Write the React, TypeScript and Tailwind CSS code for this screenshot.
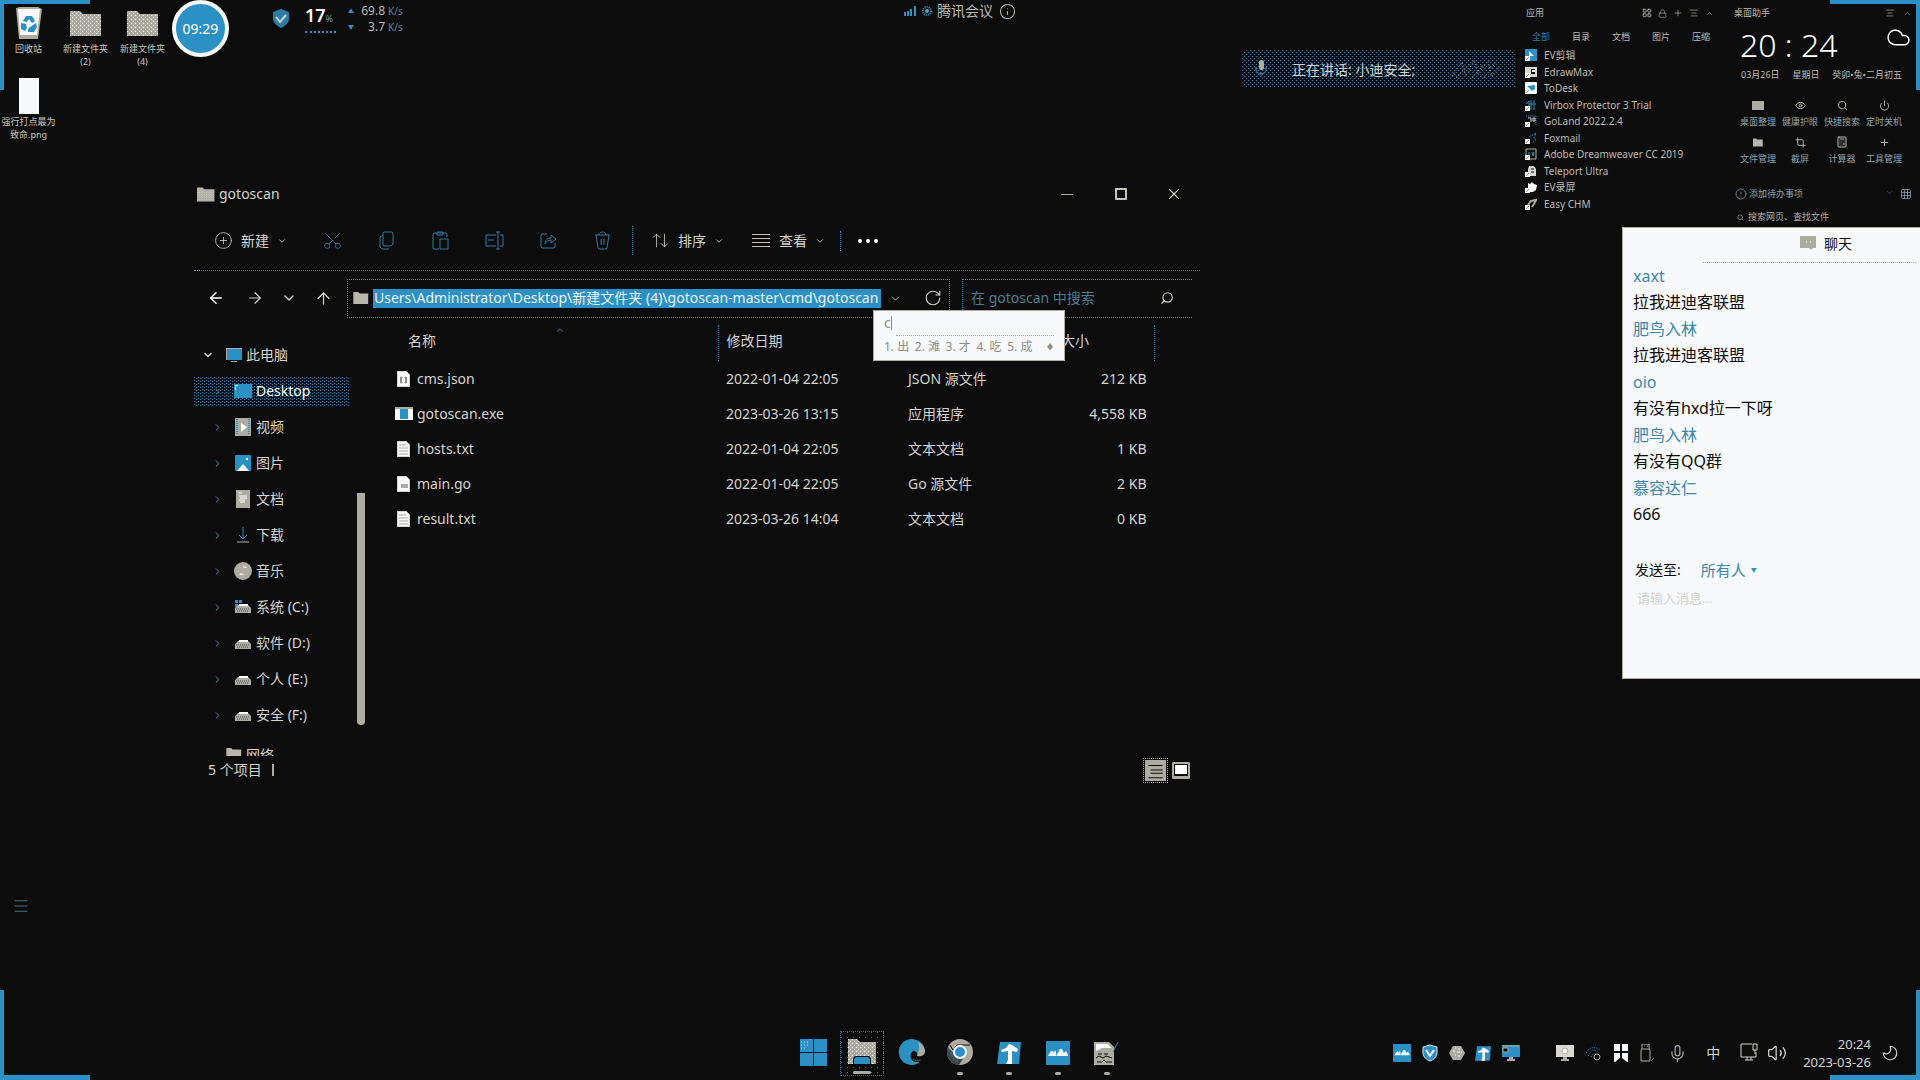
import React from "react";
import {
  ArrowDownUp, ArrowLeft, ArrowRight, ArrowUp, ChevronDown, ChevronRight, ChevronUp, CirclePlus,
  Crop, Eye, Info, Menu, Mic, Moon, Plus, Power, RotateCw, Scissors, Search,
  Volume2, X, Cloud, Calculator, CircleAlert, LayoutGrid, Lock, AlignCenter, Grid3x3,
} from "lucide-react";

type SvgProps = { className?: string };

const FolderIcon = ({ className }: SvgProps) => (
  <svg viewBox="0 0 32 25" className={className} aria-hidden="true">
    <defs>
      <pattern id="grain" width="4" height="4" patternUnits="userSpaceOnUse">
        <rect width="4" height="4" fill="#aeaca0" />
        <rect width="1" height="1" fill="#f8f9fb" />
        <rect x="2" y="2" width="1" height="1" fill="#f8f9fb" />
      </pattern>
    </defs>
    <path d="M0 1 L1 0 H10 L13 3 H31 V25 H0 Z" fill="url(#grain)" />
  </svg>
);

const RecycleBin = () => (
  <svg viewBox="0 0 26 33" className="h-[33px] w-[26px]" aria-hidden="true">
    <path d="M0 1 L4 0 H22 L26 2 L22 32 H3 Z" fill="#aeaca0" />
    <path d="M2 2 H24 L21 28 H4 Z" fill="#f8f9fb" />
    <path d="M10 9h6l3 5-3 2-3-4-2 3-4-1zM5 16l5 1 1 4-2 3-4-2zM14 20l6-4 1 4-3 5h-6v-3z" fill="#2b91c4" />
  </svg>
);

const Shield = ({ className }: SvgProps) => (
  <svg viewBox="0 0 16 19" className={className} aria-hidden="true">
    <path d="M8 0 L16 3 V10 C16 14 12 17 8 19 C4 17 0 14 0 10 V3 Z" fill="#2b7ba5" />
    <path d="M3 8 L7 13 L13 6" stroke="#cfd3d0" strokeWidth="2" fill="none" />
  </svg>
);

const TrayShield = () => (
  <svg viewBox="0 0 16 18" className="h-[18px] w-4" aria-hidden="true">
    <path d="M8 1 L15 3 V9 C15 13 11 16 8 17 C5 16 1 13 1 9 V3 Z" fill="#2b91c4" stroke="#dfe4e6" strokeWidth="1" />
    <path d="M4 6 L8 12 L12 6" stroke="#f8f9fb" strokeWidth="2" fill="none" />
  </svg>
);

const CopyIcon = () => (
  <svg viewBox="0 0 15 19" className="h-[19px] w-[21px]" fill="none" stroke="currentColor" aria-hidden="true">
    <path d="M5 1H13L14 2V13L12 15H5L4 14V2ZM4 4L1 6V16L3 18H10" />
  </svg>
);

const PasteIcon = () => (
  <svg viewBox="0 0 17 19" className="h-[19px] w-[21px]" fill="none" stroke="currentColor" aria-hidden="true">
    <path d="M7 18H2L1 17V3L2 2H14L15 3V6M5 1H11V4H5ZM8 8H16V18H8Z" />
  </svg>
);

const RenameIcon = () => (
  <svg viewBox="0 0 19 19" className="h-[19px] w-[21px]" fill="none" stroke="currentColor" aria-hidden="true">
    <path d="M11 4H1V15H11M15 4H18V15H15M13 1V18M11 1H15M11 18H15M3 9H9" />
  </svg>
);

const ShareIcon = () => (
  <svg viewBox="0 0 17 17" className="h-[17px] w-[21px]" fill="none" stroke="currentColor" aria-hidden="true">
    <path d="M7 2H2L1 3V15L2 16H14L15 15V11M5 12C5 8 8 6 11 6V3L16 7L11 11V8C8 8 6 10 5 12Z" />
  </svg>
);

const TrashIcon = () => (
  <svg viewBox="0 0 17 19" className="h-[19px] w-[21px]" fill="none" stroke="currentColor" aria-hidden="true">
    <path d="M1 4H16M5 4C5 0 12 0 12 4M2 4L4 17L5 18H12L13 17L15 4M7 8V14M10 8V14" />
  </svg>
);

const DownloadIcon = () => (
  <svg viewBox="0 0 12 16" className="h-4 w-3" fill="none" aria-hidden="true">
    <path d="M6 0V12M2 8L6 12L10 8" stroke="#2b91c4" />
    <path d="M0 15H12" stroke="#aeaca0" />
  </svg>
);

const PcIcon = () => (
  <svg viewBox="0 0 16 15" className="h-[15px] w-4" aria-hidden="true">
    <rect x="0" y="0" width="16" height="12" fill="#aeaca0" />
    <rect x="1" y="1" width="15" height="11" fill="#2b91c4" />
    <rect x="5" y="13" width="6" height="1" fill="#aeaca0" />
  </svg>
);

const DesktopIcon = () => (
  <svg viewBox="0 0 18 14" className="h-[14px] w-[18px]" aria-hidden="true">
    <rect width="18" height="14" fill="#2b91c4" />
    <rect x="1" y="1" width="3" height="1" fill="#f8f9fb" />
    <rect x="1" y="3" width="1" height="3" fill="#f8f9fb" />
  </svg>
);

const VideoIcon = () => (
  <svg viewBox="0 0 16 18" className="h-[18px] w-4" aria-hidden="true">
    <rect width="16" height="18" fill="#aeaca0" />
    <path d="M2 1v16M14 1v16" stroke="#2b91c4" strokeWidth="2" strokeDasharray="1 1" />
    <path d="M6 5 L12 9 L6 14 Z" fill="#fff" />
  </svg>
);

const PictureIcon = () => (
  <svg viewBox="0 0 16 16" className="size-4" aria-hidden="true">
    <rect width="16" height="16" rx="1" fill="#2b91c4" />
    <path d="M2 16 L8 9 L14 16 Z" fill="#fff" />
    <rect x="11" y="3" width="2" height="2" fill="#fff" />
  </svg>
);

const DocIcon = () => (
  <svg viewBox="0 0 14 18" className="h-[18px] w-[14px]" aria-hidden="true">
    <rect width="14" height="18" fill="#aeaca0" />
    <path d="M3 3h3M3 6h8M4 8h7M3 10h6M4 12h5" stroke="#fff" />
  </svg>
);

const MusicIcon = () => (
  <svg viewBox="0 0 18 18" className="size-[18px]" aria-hidden="true">
    <circle cx="9" cy="9" r="9" fill="#aeaca0" />
    <path d="M9 5h3v1M6 13v-1h3v1" stroke="#fff" fill="none" />
  </svg>
);

const DriveIcon = ({ system }: { system?: boolean }) => (
  <svg viewBox="0 0 16 14" className="h-[14px] w-4" aria-hidden="true">
    {system && <path d="M0 0h3v3H0zM4 0h3v3H4zM0 4h3v3H0z" fill="#2b91c4" />}
    <path d="M3 5 H13 L16 8 V13 H0 V8 Z" fill="#aeaca0" />
    <path d="M4 5h9" stroke="#fff" strokeWidth="2" />
    <path d="M1 9h14M2 11h12" stroke="#3c4a50" strokeDasharray="1 1" />
  </svg>
);

const FileIcon = ({ kind }: { kind: string }) => {
  if (kind === "exe")
    return (
      <svg viewBox="0 0 18 13" className="h-[13px] w-[18px]" aria-hidden="true">
        <rect width="18" height="13" fill="#f8f9fb" />
        <path d="M0 0H18V2H0Z" fill="#aeaca0" />
        <rect x="5" y="2" width="8" height="10" fill="#2b91c4" />
      </svg>
    );
  return (
    <svg viewBox="0 0 13 16" className="h-4 w-[13px]" aria-hidden="true">
      <path d="M0 0 H9 L13 4 V16 H0 Z" fill="#f8f9fb" stroke="#aeaca0" />
      {kind === "json" && <path d="M5 6 L4 7 V11 L5 12 M8 6 L9 7 V11 L8 12" stroke="#8d8b82" fill="none" strokeWidth="2" />}
      {kind === "go" && <rect x="4" y="8" width="7" height="4" fill="#aeaca0" />}
      {kind === "txt" && <path d="M2 4h7M2 7h9M2 10h9M2 13h9" stroke="#aeaca0" />}
    </svg>
  );
};

const StartIcon = () => (
  <svg viewBox="0 0 27 27" className="size-[27px]" aria-hidden="true">
    <path d="M0 0h13v13H0zM14 0h13v13H14zM0 14h13v13H0zM14 14h13v13H14z" fill="#2b91c4" />
    <path d="M1 3h9M1 6h8M1 9h6" stroke="#cfe3ee" strokeDasharray="1 2" />
  </svg>
);

const ExplorerIcon = () => (
  <svg viewBox="0 0 28 26" className="h-[26px] w-7" aria-hidden="true">
    <path d="M0 0H9L12 3H28V25H0Z" fill="url(#grain)" />
    <path d="M5 25V19L7 17H21L23 19V25Z" fill="#0c0c0c" />
    <path d="M6 20 L8 18H20L22 20V25H6Z" fill="#2b91c4" />
  </svg>
);

const EdgeIcon = () => (
  <svg viewBox="0 0 27 27" className="size-[27px]" aria-hidden="true">
    <path d="M13 0a13 13 0 1 0 9 23c-4 1-8 0-9-4-1-3 0-5 2-7 3 0 5 2 4 5 4 0 8-1 8-5C27 5 21 0 13 0Z" fill="#2b91c4" />
    <path d="M20 3c4 2 7 6 7 10-1 4-4 5-8 4 2-4 3-9 1-14Z" fill="#aeaca0" />
    <path d="M15 20c2 2 5 2 8 1M14 22c3 2 5 2 7 1" stroke="#aeaca0" strokeDasharray="1 1" fill="none" />
  </svg>
);

const ChromeIcon = () => (
  <svg viewBox="0 0 27 27" className="size-[27px]" aria-hidden="true">
    <circle cx="13" cy="13" r="13" fill="#aeaca0" />
    <path d="M1 8a13 13 0 0 0 11 18l5-8-9-2Z" fill="#3c4548" />
    <path d="M1 8l5 9M3 14l4 6M6 20l5 2" stroke="#2b91c4" strokeDasharray="1 1" />
    <path d="M3 6l3 5 4-5h13" stroke="#0c0c0c" strokeWidth="1" fill="none" />
    <circle cx="13" cy="13" r="7" fill="#f8f9fb" />
    <circle cx="13" cy="13" r="5" fill="#2b91c4" />
  </svg>
);

const ArrowTile = ({ className }: SvgProps) => (
  <svg viewBox="0 0 24 22" className={className} aria-hidden="true">
    <path d="M3 0H24L22 22H0Z" fill="#2b91c4" />
    <path d="M4 8L9 6L12 2L15 3L21 7L20 10L15 9V22H9L11 18V9L5 10Z" fill="#f8f9fb" />
  </svg>
);

const MeetTile = ({ className }: SvgProps) => (
  <svg viewBox="0 0 24 24" className={className} aria-hidden="true">
    <rect width="24" height="24" rx="1" fill="#2b91c4" />
    <path d="M2 15L5 10H7L8 12L9 9L10 11V15ZM10 15L14 8H16L18 12L20 10L22 14V15Z" fill="#f8f9fb" />
  </svg>
);

const EditorIcon = () => (
  <svg viewBox="0 0 26 24" className="h-6 w-[26px]" aria-hidden="true">
    <path d="M0 1H15L20 6V24H0Z" fill="#aeaca0" />
    <path d="M2 3H14L17 7H8L2 10Z" fill="#f8f9fb" />
    <path d="M4 13h4M10 13h4M2 17l3-2 4 2 3-2 6 2M3 21h5l2-2 2 2h6" stroke="#0c0c0c" fill="none" strokeWidth="1" />
    <path d="M24 1L19 11" stroke="#2b91c4" strokeWidth="1" />
  </svg>
);

const SmallMonitor = ({ blue }: { blue?: boolean }) => (
  <svg viewBox="0 0 18 17" className="h-[17px] w-[18px]" aria-hidden="true">
    <rect width="18" height="12" fill={blue ? "#2b91c4" : "#d9d9d2"} />
    {blue ? <path d="M0 1H17M1 3h5v4H1z" stroke="#aeaca0" fill="#0c0c0c" /> : <circle cx="9" cy="6" r="3" fill="#fff" stroke="#aeaca0" />}
    <path d="M7 12h4v2h2v2H5v-2h2z" fill="#aeaca0" />
  </svg>
);

const SignalIcon = () => (
  <svg viewBox="0 0 16 16" className="size-4" fill="none" aria-hidden="true">
    <path d="M0 8C3 2 9 1 14 5M2 11C5 5 9 4 12 7M5 12C6 9 8 8 10 9" stroke="#2b91c4" strokeDasharray="1 1" />
    <circle cx="11" cy="12" r="3" stroke="#aeaca0" />
  </svg>
);

const QuadIcon = () => (
  <svg viewBox="0 0 14 18" className="h-[18px] w-[14px]" aria-hidden="true">
    <path d="M0 0h6v7H0zM8 0h6v7H8zM0 9h6v5l-5 4H0zM8 9h6v9h-1l-5-4z" fill="#f8f9fb" />
  </svg>
);

const Hexagon = () => (
  <svg viewBox="0 0 16 16" className="size-4" aria-hidden="true">
    <path d="M4 1h8l4 7-4 7H4L0 8Z" fill="#aeaca0" />
    <path d="M6 3h1M9 4h2M4 6h2M8 7h3M12 7h1M6 10h1M9 11h2" stroke="#f8f9fb" />
  </svg>
);

const UsbStick = () => (
  <svg viewBox="0 0 15 18" className="h-[18px] w-[15px]" fill="none" stroke="#aeaca0" aria-hidden="true">
    <path d="M2 5V0H9V5M1 6 L2 5H9L10 6V17H1ZM4 2h1M7 2h1" />
    <path d="M11 17l3-3" stroke="#2b91c4" />
  </svg>
);

const DisplayIcon = () => (
  <svg viewBox="0 0 19 18" className="h-[18px] w-[19px]" fill="none" stroke="#d5d4cc" aria-hidden="true">
    <path d="M12 1H1V14H16V9M5 17H13M7 14V17M11 14V17" />
    <path d="M13 1h4v6h-4zM15 7V11" />
  </svg>
);

const Corner = ({ className }: { className: string }) => <div aria-hidden="true" className={`pointer-events-none absolute size-[90px] border-[#2b91c4] ${className}`} />;

const apps: [string, string][] = [
  ["EV剪辑", "scissor"], ["EdrawMax", "edraw"], ["ToDesk", "todesk"], ["Virbox Protector 3 Trial", "virbox"],
  ["GoLand 2022.2.4", "goland"], ["Foxmail", "foxmail"], ["Adobe Dreamweaver CC 2019", "dw"],
  ["Teleport Ultra", "teleport"], ["EV录屏", "ev"], ["Easy CHM", "chm"],
];

const AppIcon = ({ kind }: { kind: string }) => (
  <svg viewBox="0 0 12 12" className="size-3" aria-hidden="true">
    {kind === "scissor" && <><rect width="12" height="12" fill="#2b91c4" /><path d="M4 2l5 5H4z" fill="#fff" /></>}
    {kind === "edraw" && <><rect y="1" width="12" height="10" fill="#d9d9d2" /><path d="M6 3h4v5H6z" fill="#0c0c0c" /><path d="M7 5h3" stroke="#fff" strokeWidth="2" /></>}
    {kind === "todesk" && <><rect width="12" height="12" rx="1" fill="#fff" /><path d="M2 4L10 3V7L7 9Z" fill="#2b91c4" /></>}
    {kind === "virbox" && <path d="M1 5L4 2V10M6 1V11M9 1V11M4 5H11" stroke="#2b91c4" fill="none" />}
    {kind === "goland" && <><path d="M1 1H11V11" stroke="#2b91c4" strokeDasharray="1 1" fill="none" /><path d="M3 3h3v4M8 3h2v3H8z" stroke="#d5d4cc" fill="none" /></>}
    {kind === "foxmail" && <path d="M4 5L11 1L9 6L11 8L7 11" stroke="#2b91c4" strokeDasharray="2 1" fill="none" />}
    {kind === "dw" && <><path d="M1 1H11V11H1Z" stroke="#aeaca0" fill="#0c0c0c" /><path d="M4 4v4M7 4l1 4 1-4" stroke="#2b91c4" fill="none" /></>}
    {kind === "teleport" && <><path d="M4 1H9L11 4V11H3V4Z" fill="#d9d9d2" /><path d="M6 4h3M6 7h3" stroke="#0c0c0c" /></>}
    {kind === "ev" && <path d="M3 2L5 3L7 1L9 3L12 4L11 9L8 11H1L3 8Z" fill="#fff" />}
    {kind === "chm" && <path d="M3 7L6 3L11 2L9 6L7 9" stroke="#aeaca0" strokeWidth="2" fill="none" />}
    <rect y="7" width="5" height="5" fill="#fff" />
    <path d="M1 11L4 8" stroke="#8d8b82" />
  </svg>
);

const sideItems: [string, React.ReactNode][] = [
  ["Desktop", <DesktopIcon />], ["视频", <VideoIcon />], ["图片", <PictureIcon />], ["文档", <DocIcon />],
  ["下载", <DownloadIcon />], ["音乐", <MusicIcon />],
  ["系统 (C:)", <DriveIcon system />], ["软件 (D:)", <DriveIcon />], ["个人 (E:)", <DriveIcon />], ["安全 (F:)", <DriveIcon />],
];

const files = [
  ["cms.json", "2022-01-04 22:05", "JSON 源文件", "212 KB", "json"],
  ["gotoscan.exe", "2023-03-26 13:15", "应用程序", "4,558 KB", "exe"],
  ["hosts.txt", "2022-01-04 22:05", "文本文档", "1 KB", "txt"],
  ["main.go", "2022-01-04 22:05", "Go 源文件", "2 KB", "go"],
  ["result.txt", "2023-03-26 14:04", "文本文档", "0 KB", "txt"],
];

const messages = [
  ["xaxt", "拉我进迪客联盟"], ["肥鸟入林", "拉我进迪客联盟"], ["oio", "有没有hxd拉一下呀"],
  ["肥鸟入林", "有没有QQ群"], ["慕容达仁", "666"],
];

const tools: [string, React.ReactNode][] = [
  ["桌面整理", <span className="block h-[9px] w-3 bg-[#aeaca0]" />],
  ["健康护眼", <Eye size={11} />], ["快捷搜索", <Search size={11} />], ["定时关机", <Power size={11} />],
  ["文件管理", <FolderIcon className="h-[9px] w-[10px]" />], ["截屏", <Crop size={11} />],
  ["计算器", <Calculator size={12} />], ["工具管理", <Plus size={11} />],
];

const DesktopItem = ({ label, sub, children }: { label: string; sub?: string; children: React.ReactNode }) => (
  <button className="flex w-[57px] shrink-0 flex-col items-center text-[9px] leading-[13px] whitespace-nowrap text-[#c9c7bd]">
    <span className="flex h-[38px] items-center justify-center">{children}</span>
    <span>{label}</span>
    {sub && <span>{sub}</span>}
  </button>
);

function Explorer() {
  return (
    <section aria-label="gotoscan" className="absolute top-[177px] left-[194px] flex w-[1006px] flex-col text-[14px] leading-5 text-[#d5d4cc]">
      <header className="flex h-[34px] items-center pl-[3px]">
        <FolderIcon className="h-[15px] w-[18px]" />
        <h1 className="pl-1 text-[14px]">gotoscan</h1>
        <div className="ml-auto flex items-center">
          <button aria-label="最小化" className="flex w-[54px] justify-center"><span className="h-px w-3 bg-[#aeaca0]" /></button>
          <button aria-label="最大化" className="flex w-[53px] justify-center"><span className="size-3 rounded-[1px] border-2 border-[#c4c2b8]" /></button>
          <button aria-label="关闭" className="flex w-[53px] justify-center"><X size={18} strokeWidth={1.5} /></button>
        </div>
      </header>
      <div className="flex h-[60px] items-center border-b border-dotted border-[#2b91c4] pl-5">
        <button className="flex w-[103px] items-center"><CirclePlus size={19} strokeWidth={1} /><span className="px-2">新建</span><ChevronDown size={10} /></button>
        <div className="flex w-[316px] items-center gap-[33px] border-r border-dotted border-[#2b91c4] py-1 pl-[5px] text-[#35799c]">
          <button aria-label="剪切"><Scissors size={21} strokeWidth={1} className="-rotate-90" /></button>
          <button aria-label="复制"><CopyIcon /></button>
          <button aria-label="粘贴"><PasteIcon /></button>
          <button aria-label="重命名"><RenameIcon /></button>
          <button aria-label="共享"><ShareIcon /></button>
          <button aria-label="删除"><TrashIcon /></button>
        </div>
        <button className="flex w-[119px] items-center pl-[18px]"><ArrowDownUp size={19} strokeWidth={1} className="-scale-x-100" /><span className="px-2">排序</span><ChevronDown size={10} /></button>
        <button className="flex w-[88px] items-center">
          <svg viewBox="0 0 18 13" className="h-[13px] w-[18px]" stroke="#c4c2b8" aria-hidden="true"><path d="M0 0.5H18M0 4.5H18M0 8.5H18M0 12.5H18" /></svg>
          <span className="pr-2 pl-[9px]">查看</span><ChevronDown size={10} />
        </button>
        <span className="h-5 border-l border-dotted border-[#2b91c4]" />
        <button aria-label="更多" className="flex gap-1 pl-[17px]">
          <span className="size-1 rounded-full bg-white" /><span className="size-1 rounded-full bg-white" /><span className="size-1 rounded-full bg-white" />
        </button>
      </div>
      <div className="flex h-[54px] items-center">
        <div className="flex w-[153px] shrink-0 items-center gap-[21px] pl-[13px]">
          <button aria-label="后退" className="text-white"><ArrowLeft size={18} strokeWidth={2} /></button>
          <button aria-label="前进"><ArrowRight size={18} strokeWidth={1.5} /></button>
          <button aria-label="历史" className="-mx-1"><ChevronDown size={16} /></button>
          <button aria-label="向上"><ArrowUp size={19} strokeWidth={1.5} /></button>
        </div>
        <div className="flex h-[39px] w-[603px] shrink-0 items-center border border-dotted border-[#2b91c4] pl-[5px]">
          <FolderIcon className="mr-1 h-3 w-4 shrink-0" />
          <input aria-label="地址" readOnly value="Users\Administrator\Desktop\新建文件夹 (4)\gotoscan-master\cmd\gotoscan" className="h-[19px] w-[508px] bg-[#2b91c4] pl-px text-[14px] text-[#eef2f3]" />
          <button aria-label="展开" className="ml-2"><ChevronDown size={13} strokeWidth={1.5} /></button>
          <button aria-label="刷新" className="ml-[22px]"><RotateCw size={18} strokeWidth={1.5} /></button>
        </div>
        <div className="mr-2 ml-3 flex h-[39px] min-w-0 flex-1 items-center border-y border-l border-dotted border-[#2b91c4] pr-[18px] pl-2">
          <input aria-label="搜索" placeholder="在 gotoscan 中搜索" className="min-w-0 flex-1 bg-transparent text-[14px] placeholder:text-[#4a7c94]" />
          <Search size={14} strokeWidth={2} className="-scale-x-100" />
        </div>
      </div>
      <div className="flex h-[431px] overflow-hidden">
        <nav aria-label="文件夹" className="w-[156px] shrink-0 pt-3">
          <a href="#pc" className="flex h-9 items-center pl-2"><ChevronDown size={12} strokeWidth={3} /><span className="ml-3"><PcIcon /></span><span className="ml-1">此电脑</span></a>
          <ul>
            {sideItems.map(([name, icon], i) => (
              <li key={name} className="flex h-9 items-center">
                <a href={`#${i}`} className={i === 0
                  ? "flex h-[29px] w-full items-center bg-[conic-gradient(from_270deg_at_1px_1px,#2b91c4_90deg,transparent_0),conic-gradient(from_270deg_at_1px_1px,#2b91c4_90deg,transparent_0)] bg-[length:4px_3px,4px_3px] bg-[position:0_0,2px_1px] pl-[18px] text-white"
                  : "flex h-[29px] w-full items-center pl-[18px]"}>
                  <ChevronRight size={11} strokeWidth={2} className="text-[#5f93ab]" />
                  <span className="ml-[10px] flex w-5 justify-center">{icon}</span>
                  <span className="ml-[3px]">{name}</span>
                </a>
              </li>
            ))}
          </ul>
          <a href="#net" className="flex h-9 items-start pt-2 pl-8"><FolderIcon className="mt-[7px] h-3 w-4" /><span className="ml-1 pt-1">网络</span></a>
        </nav>
        <div className="ml-[7px] flex w-2 shrink-0 pt-[168px]"><span className="h-[232px] w-2 rounded-b-sm bg-[#aeaca0]" /></div>
        <table className="ml-6 h-fit w-[766px] table-fixed text-left">
          <thead>
            <tr className="h-9 align-middle">
              <th className="relative w-[329px] border-r border-dotted border-[#2b91c4] pb-1 pl-[19px] font-normal">名称<ChevronUp size={10} className="absolute top-0 left-[166px] text-[#2b91c4]" /></th>
              <th className="w-[182px] pb-1 pl-2 font-normal">修改日期</th>
              <th aria-label="类型" className="w-[154px]" />
              <th className="border-r border-dotted border-[#2b91c4] pb-1 pl-[7px] font-normal">大小</th>
            </tr>
          </thead>
          <tbody>
            {files.map(([name, date, type, size, kind]) => (
              <tr key={name} className="h-[35px]">
                <td><span className="flex items-center pl-1"><span className="flex w-[22px] justify-center pr-px"><FileIcon kind={kind} /></span><span className="pl-0.5">{name}</span></span></td>
                <td className="pl-2">{date}</td>
                <td className="pl-2">{type}</td>
                <td className="pr-2 text-right">{size}</td>
              </tr>
            ))}
          </tbody>
        </table>
      </div>
      <footer className="flex h-7 items-center pl-[14px]">
        <span>5 个项目</span>
        <span className="ml-2.5 h-3 w-0.5 bg-[#aeaca0]" />
        <div className="ml-auto flex items-center gap-1 pr-[10px]">
          <button aria-label="详细信息" className="flex size-[25px] items-center justify-center border border-dotted border-[#aeaca0]">
            <svg viewBox="0 0 19 19" className="size-[21px]" aria-hidden="true"><rect width="19" height="19" fill="#aeaca0" /><path d="M3 5h13M5 9h11M5 12h11M3 16h13" stroke="#0c0c0c" /></svg>
          </button>
          <button aria-label="大图标">
            <svg viewBox="0 0 18 17" className="h-[17px] w-[18px]" aria-hidden="true"><rect width="18" height="17" rx="1" fill="#aeaca0" /><rect x="2" y="2" width="14" height="12" fill="#0c0c0c" /><rect x="3" y="3" width="12" height="9" fill="#fff" /></svg>
          </button>
        </div>
      </footer>
    </section>
  );
}

function ImePopup() {
  return (
    <div className="absolute top-[310px] left-[873px] w-48 border border-[#aeaca0] bg-[#f8f9fb] px-[10px] pb-[2px] text-[#8f8d83]">
      <div className="flex h-6 items-center gap-1 text-[14px] leading-6"><span className="border-r border-[#8f8d83] leading-[14px]">c</span></div>
      <div className="ml-3 border-t border-dotted border-[#aeaca0]" />
      <div className="flex h-[22px] items-center justify-between text-[12px] leading-5">
        <span>1. 出</span><span>2. 滩</span><span>3. 才</span><span>4. 吃</span><span>5. 成</span><span className="ml-2 text-[8px]">♦</span>
      </div>
    </div>
  );
}

function AppPanel() {
  return (
    <section aria-label="应用" className="absolute top-0 right-[200px] w-[195px] pt-[6px] text-[9px] leading-[14px] text-[#bdbbb0]">
      <header className="flex items-center pl-px">
        <span>应用</span>
        <div className="ml-auto flex items-center gap-[6px] pr-[6px]">
          <LayoutGrid size={10} /><Lock size={9} strokeWidth={1.5} /><Plus size={10} strokeWidth={1.5} /><AlignCenter size={10} strokeWidth={1.5} /><ChevronUp size={9} strokeWidth={1.5} />
        </div>
      </header>
      <div role="tablist" className="flex justify-between pt-[10px] pr-[10px] pl-[7px]">
        <button role="tab" aria-selected="true" className="text-[#2b7ba5]">全部</button>
        <button role="tab">目录</button><button role="tab">文档</button><button role="tab">图片</button><button role="tab">压缩</button>
      </div>
      <ul className="pt-[3px] text-[10px]">
        {apps.map(([name, kind], i) => (
          <li key={name} className={i % 2 ? "flex h-[17px] items-center gap-[7px]" : "flex h-4 items-center gap-[7px]"}><AppIcon kind={kind} /><span className="leading-4">{name}</span></li>
        ))}
      </ul>
    </section>
  );
}

function Assistant() {
  return (
    <section aria-label="桌面助手" className="absolute top-0 right-0 w-[186px] pt-[6px] text-[9px] leading-[14px] text-[#bdbbb0]">
      <header className="flex items-center">
        <span>桌面助手</span>
        <div className="ml-auto flex items-center gap-2 pr-2"><AlignCenter size={10} strokeWidth={1.5} /><ChevronUp size={9} strokeWidth={1.5} className="text-[#6aa0ba]" /></div>
      </header>
      <div className="flex justify-between pr-[9px] pl-[6px] text-white">
        <time className="pt-1 text-[32px] leading-[42px] font-light whitespace-nowrap">20 : 24</time>
        <Cloud size={25} strokeWidth={1.5} className="mt-[5px]" />
      </div>
      <div className="flex justify-between pt-0.5 pr-[18px] pl-[7px]"><span>03月26日</span><span>星期日</span><span>癸卯•兔•二月初五</span></div>
      <div className="grid grid-cols-4 pt-[15px] pr-[15px] pl-[3px]">
        {tools.map(([name, icon]) => (
          <button key={name} className="flex h-[37px] flex-col items-center"><span className="flex h-4 items-center">{icon}</span><span className="mt-0.5 text-[#8fa5aa]">{name}</span></button>
        ))}
      </div>
      <div className="flex items-center pt-4 pr-2 pl-px text-[#7fa3b3]">
        <CircleAlert size={12} strokeWidth={1.5} /><span className="pl-[2px]">添加待办事项</span>
        <span className="ml-auto flex gap-[6px]"><ChevronDown size={9} strokeWidth={1} /><Grid3x3 size={12} strokeWidth={1.5} /></span>
      </div>
      <label className="flex items-center gap-1 pt-[9px] pl-[3px]">
        <Search size={7} /><input aria-label="搜索网页" placeholder="搜索网页、查找文件" className="w-32 bg-transparent leading-[14px] placeholder:text-[#a9b0ac]" />
      </label>
    </section>
  );
}

function Chat() {
  return (
    <section aria-label="聊天" className="absolute top-[227px] right-0 flex h-[452px] w-[298px] flex-col border border-r-0 border-[#aeaca0] bg-[#f8f9fb] text-[#0c0c0c]">
      <header className="flex h-[34px] items-center gap-2 pb-1 pl-[177px] text-[14px]">
        <svg viewBox="0 0 16 14" className="h-[14px] w-4" aria-hidden="true"><path d="M0 0H16V12H13L11 14L9 12H0Z" fill="#aeaca0" /><path d="M6 6h1M10 6h1" stroke="#fff" /></svg>
        <h2>聊天</h2>
      </header>
      <div className="mr-1 ml-20 border-t border-dotted border-[#aeaca0]" />
      <ul className="pl-[10px] text-[16px]">
        {messages.map(([who, text], i) => (
          <li key={i}><p className="h-[26px] leading-[26px] text-[#3b86ab]">{who}</p><p className="h-[27px] leading-[26px]">{text}</p></li>
        ))}
      </ul>
      <div className="flex items-center pt-[30px] pl-[12px] text-[14px] leading-6">
        <label htmlFor="target">发送至:</label>
        <select id="target" className="ml-5 w-[50px] appearance-none bg-transparent text-[15px] text-[#3b86ab]"><option>所有人</option></select>
        <span className="text-[6px] text-[#2b91c4]">▼</span>
      </div>
      <textarea aria-label="消息" placeholder="请输入消息…" className="mt-1 ml-[14px] flex-1 resize-none bg-transparent text-[13px] leading-6 placeholder:text-[#d3d2cb]" />
    </section>
  );
}

const TaskButton = ({ label, active, running, children }: { label: string; active?: boolean; running?: boolean; children: React.ReactNode }) => (
  <button aria-label={label} className={active
    ? "flex h-[45px] w-11 flex-col items-center justify-end border border-dotted border-[#2b6f93] bg-[conic-gradient(from_270deg_at_1px_1px,#2b6f93_90deg,transparent_0)] bg-[length:6px_5px]"
    : "flex h-[45px] w-11 flex-col items-center justify-end"}>
    <span className="flex h-7 items-center">{children}</span>
    <span className={active ? "mt-[5px] mb-px h-[3px] w-[18px] rounded-full bg-[#aeaca0]" : running ? "mt-[5px] mb-px h-[3px] w-[6px] rounded-full bg-[#aeaca0]" : "mt-[5px] mb-px h-[3px]"} />
  </button>
);

export default function App() {
  return (
    <main className="relative min-h-screen overflow-hidden bg-[#0c0c0c] font-['Noto_Sans','Noto_Sans_CJK_SC',sans-serif] text-[#d5d4cc]">
      <Corner className="top-0 left-0 border-t-4 border-l-4" />
      <Corner className="top-0 right-0 border-t-4 border-r-4" />
      <Corner className="bottom-0 left-0 border-b-[5px] border-l-4" />
      <Corner className="right-0 bottom-0 border-r-4 border-b-[5px]" />

      <div className="absolute top-1 left-0 flex flex-col gap-[9px]">
        <div className="flex">
          <DesktopItem label="回收站"><RecycleBin /></DesktopItem>
          <DesktopItem label="新建文件夹" sub="(2)"><FolderIcon className="h-[25px] w-8" /></DesktopItem>
          <DesktopItem label="新建文件夹" sub="(4)"><FolderIcon className="h-[25px] w-8" /></DesktopItem>
        </div>
        <DesktopItem label="强行打点最为" sub="致命.png"><span className="h-9 w-5 bg-[#f8f9fb]" /></DesktopItem>
      </div>

      <div className="absolute top-0 left-[172px] flex size-[57px] items-center justify-center rounded-full border-4 border-[#f8f9fb] bg-[#2b91c4] text-[14px] text-white">09:29</div>

      <div className="absolute top-[3px] left-[273px] flex items-start">
        <Shield className="mt-[6px] h-[19px] w-4" />
        <div className="ml-4 w-[31px]">
          <p className="text-[18px] leading-6 font-semibold whitespace-nowrap text-white">17<span className="text-[9px] font-normal text-[#6aa0ba]">%</span></p>
          <div className="border-t-2 border-dotted border-[#2b91c4]" />
        </div>
        <div className="ml-3 grid grid-cols-[10px_24px_auto] gap-x-[3px] text-[12px] leading-4 text-[#bdbbb0]">
          <span className="text-[6px] text-[#2b91c4]">▲</span><span className="text-right">69.8</span><span className="text-[10px] text-[#5d8698]">K/s</span>
          <span className="text-[6px] text-[#2b91c4]">▼</span><span className="text-right">3.7</span><span className="text-[10px] text-[#5d8698]">K/s</span>
        </div>
      </div>

      <div className="absolute top-px left-[904px] flex items-center text-[14px] leading-5 text-[#bdbbb0]">
        <svg viewBox="0 0 12 10" className="h-[10px] w-3" aria-hidden="true"><path d="M1 10V6M4 10V5M7 10V3M11 10V0" stroke="#2b91c4" strokeWidth="2" /></svg>
        <svg viewBox="0 0 10 10" className="ml-[6px] size-[10px]" aria-hidden="true"><circle cx="5" cy="5" r="4" fill="none" stroke="#2b91c4" strokeWidth="2" strokeDasharray="1 1" /><circle cx="5" cy="5" r="2" fill="#6aa0ba" /></svg>
        <span className="ml-[5px]">腾讯会议</span>
        <Info size={17} strokeWidth={1.5} className="ml-[6px]" />
      </div>

      <div className="absolute top-[50px] right-[404px] flex h-[38px] w-[274px] items-center rounded-sm bg-[conic-gradient(from_270deg_at_1px_1px,#2b91c4_90deg,transparent_0),conic-gradient(from_270deg_at_1px_1px,#2b91c4_90deg,transparent_0)] bg-[length:4px_4px] bg-[position:0_0,2px_2px] pl-[13px] text-[14px]">
        <svg viewBox="0 0 12 18" className="h-[18px] w-3" aria-hidden="true"><rect x="4" y="0" width="5" height="10" rx="2" fill="#aeaca0" /><path d="M1 7v3c0 5 10 5 10 0V7M6 14v3" stroke="#2b91c4" fill="none" /></svg>
        <span className="ml-[25px]">正在讲话: 小迪安全;</span>
        <svg viewBox="0 0 50 26" className="mr-4 ml-auto h-[26px] w-[50px]" fill="none" stroke="#aeaca0" strokeDasharray="1 2" aria-hidden="true">
          <path d="M2 20L12 6L16 20L24 4L28 18L38 5L42 20L48 12M6 22L20 8M22 22L34 8M34 22L46 6" />
        </svg>
      </div>

      <Menu size={18} strokeWidth={1} className="absolute top-[897px] left-[12px] text-[#5f93ab]" />

      <Explorer />
      <ImePopup />
      <AppPanel />
      <Assistant />
      <Chat />

      <footer className="absolute right-0 bottom-1 left-0 flex h-[46px] items-center justify-end">
        <div className="absolute left-1/2 flex -translate-x-[169px] gap-[5px]">
          <TaskButton label="开始"><StartIcon /></TaskButton>
          <TaskButton label="资源管理器" active><ExplorerIcon /></TaskButton>
          <TaskButton label="Edge"><EdgeIcon /></TaskButton>
          <TaskButton label="Chrome" running><ChromeIcon /></TaskButton>
          <TaskButton label="ToDesk" running><ArrowTile className="h-[22px] w-6" /></TaskButton>
          <TaskButton label="腾讯会议" running><MeetTile className="size-6" /></TaskButton>
          <TaskButton label="编辑器" running><EditorIcon /></TaskButton>
        </div>
        <div className="flex w-[127px] items-center justify-between">
          <MeetTile className="size-[18px]" /><TrayShield /><Hexagon /><ArrowTile className="h-[17px] w-4" /><SmallMonitor blue />
        </div>
        <div className="ml-9 flex items-center gap-3">
          <SmallMonitor /><SignalIcon /><QuadIcon /><UsbStick />
        </div>
        <Mic size={19} strokeWidth={1.5} className="ml-[13px] text-[#aeaca0]" />
        <button className="ml-[19px] text-[14px] leading-5">中</button>
        <div className="ml-5 flex gap-2"><DisplayIcon /><Volume2 size={20} strokeWidth={1.5} /></div>
        <time className="ml-4 text-right text-[13px] leading-[18px]">20:24<br />2023-03-26</time>
        <Moon size={18} strokeWidth={1.5} className="mr-[21px] ml-[10px] -scale-x-100" />
      </footer>
    </main>
  );
}
